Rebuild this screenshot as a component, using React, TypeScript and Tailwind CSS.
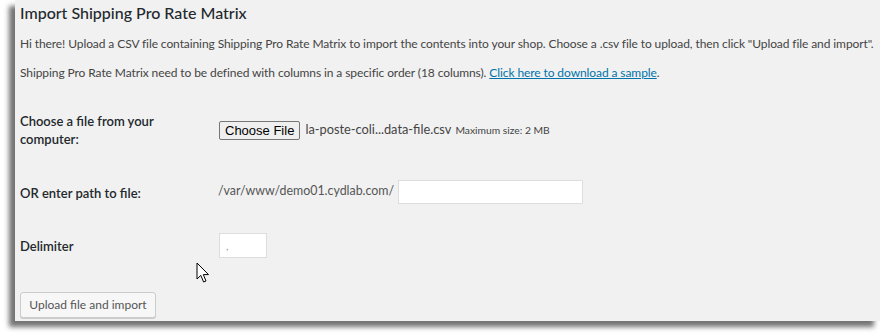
const Cursor = () => (
  <svg
    className="absolute left-[196px] top-[262px]"
    width="14"
    height="22"
    viewBox="0 0 14 22"
  >
    <path
      d="M1 1 L1 17 L4.8 13.4 L7.6 20 L10 19 L7.3 12.6 L12.5 12.6 Z"
      fill="#fff"
      stroke="#000"
      strokeWidth="1"
      strokeLinejoin="round"
    />
  </svg>
);

const App = () => {
  return (
    <div className="w-[880px] h-[336px] bg-white overflow-hidden relative font-['Lato',sans-serif]">
      <div className="ml-[15px] w-[865px] h-[321px] bg-[#f1f1f1] shadow-[-6px_6px_5px_rgba(0,0,0,0.55)] relative">
        <div className="pl-[5px] pt-[1px] text-[#444]">
          <h2 className="text-[16px] leading-6 text-[#23282d] font-medium">
            Import Shipping Pro Rate Matrix
          </h2>
          <p className="mt-[9px] text-[12px] leading-5 tracking-[-0.09px] whitespace-nowrap">
            Hi there! Upload a CSV file containing Shipping Pro Rate Matrix to
            import the contents into your shop. Choose a .csv file to upload,
            then click "Upload file and import".
          </p>
          <p className="mt-[9px] text-[12px] leading-5 tracking-[-0.09px] whitespace-nowrap">
            Shipping Pro Rate Matrix need to be defined with columns in a
            specific order (18 columns).{" "}
            <a href="#" className="text-[#0073aa] underline">
              Click here to download a sample
            </a>
            .
          </p>

          <div className="mt-[22px] flex h-[50px] items-center">
            <label className="w-[199px] pr-10 text-[13px] leading-[18px] font-semibold text-[#23282d]">
              Choose a file from your computer:
            </label>
            <div className="flex items-center">
              <button className="h-[19px] px-[5px] border border-[#767676] rounded-[2px] bg-[#efefef] text-[13px] leading-none text-black font-['Liberation_Sans',sans-serif]">
                Choose File
              </button>
              <span className="ml-[5px] text-[12.8px] text-[#444]">
                la-poste-coli...data-file.csv
              </span>
              <span className="ml-[4px] mt-[2px] text-[10.3px] text-[#444]">
                Maximum size: 2 MB
              </span>
            </div>
          </div>

          <div className="mt-[15px] flex h-[44px] items-center">
            <label className="w-[198px] mt-[3px] text-[13px] font-semibold text-[#23282d]">
              OR enter path to file:
            </label>
            <span className="text-[12.4px] text-[#555] -mt-[2px]">
              /var/www/demo01.cydlab.com/
            </span>
            <input
              type="text"
              className="ml-[4px] w-[185px] h-[24px] bg-white border border-[#ddd] outline-none"
            />
          </div>

          <div className="mt-[10px] flex h-[44px] items-center">
            <label className="w-[199px] mt-[2px] text-[13px] font-semibold text-[#23282d]">
              Delimiter
            </label>
            <input
              type="text"
              defaultValue=","
              className="w-[48px] h-[25px] -mt-[2px] px-[6px] bg-white border border-[#ddd] text-[11px] text-[#999] outline-none"
            />
          </div>

          <div className="mt-[23px]">
            <button className="h-[26px] w-[136px] border border-[#ccc] rounded-[3px] bg-[#f7f7f7] shadow-[0_1px_0_#ccc] text-[12px] text-[#555]">
              Upload file and import
            </button>
          </div>
        </div>
      </div>
      <Cursor />
    </div>
  );
};

export default App;
